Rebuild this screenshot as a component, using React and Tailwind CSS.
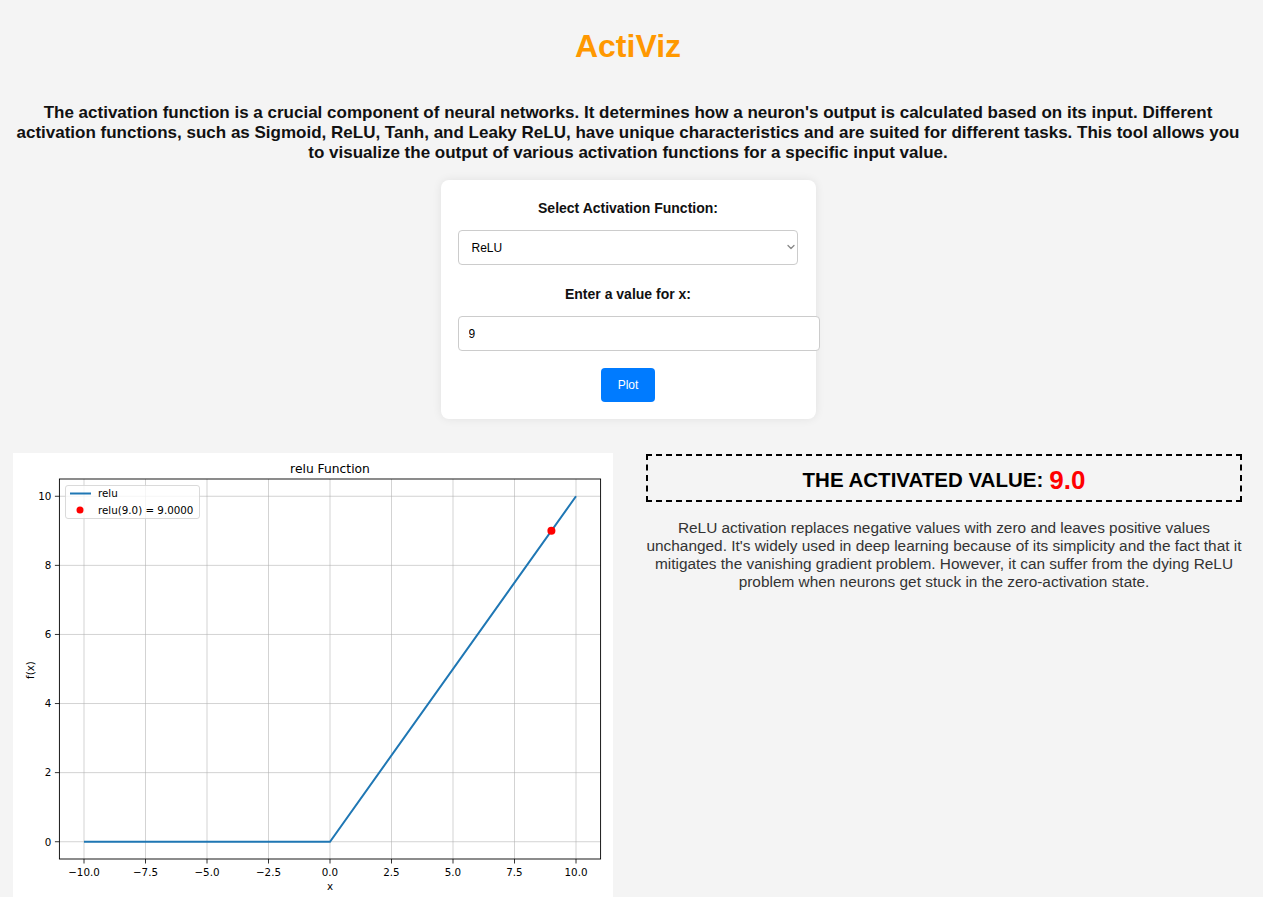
import { useState } from 'react'

const descriptions = {
  relu: "ReLU activation replaces negative values with zero and leaves positive values unchanged. It's widely used in deep learning because of its simplicity and the fact that it mitigates the vanishing gradient problem. However, it can suffer from the dying ReLU problem when neurons get stuck in the zero-activation state.",
}

// plot frame (image coords, 600 wide)
const AX = { left: 46.4, right: 587.6, top: 26, bottom: 406 }
const sx = (v) => AX.left + (v + 11) * ((AX.right - AX.left) / 22)
const sy = (v) => AX.bottom - (v + 0.5) * ((AX.bottom - AX.top) / 11)

const fmtTick = (v) => (v < 0 ? '\u2212' + Math.abs(v).toFixed(1) : v.toFixed(1))

function ReluChart({ x }) {
  const xTicks = [-10, -7.5, -5, -2.5, 0, 2.5, 5, 7.5, 10]
  const yTicks = [0, 2, 4, 6, 8, 10]
  const y = Math.max(0, x)
  return (
    <svg width="600" height="450" viewBox="0 0 600 450" className="block bg-white" style={{ fontFamily: '"DejaVu Sans", sans-serif' }}>
      {/* grid */}
      {xTicks.map((t) => (
        <line key={'gx' + t} x1={sx(t)} x2={sx(t)} y1={AX.top} y2={AX.bottom} stroke="#b0b0b0" strokeOpacity="0.7" strokeWidth="0.8" />
      ))}
      {yTicks.map((t) => (
        <line key={'gy' + t} x1={AX.left} x2={AX.right} y1={sy(t)} y2={sy(t)} stroke="#b0b0b0" strokeOpacity="0.7" strokeWidth="0.8" />
      ))}

      {/* relu line */}
      <polyline points={`${sx(-10)},${sy(0)} ${sx(0)},${sy(0)} ${sx(10)},${sy(10)}`} fill="none" stroke="#1f77b4" strokeWidth="2" />
      <circle cx={sx(x)} cy={sy(y)} r="4" fill="#ff0000" />

      {/* spines */}
      <rect x={AX.left} y={AX.top} width={AX.right - AX.left} height={AX.bottom - AX.top} fill="none" stroke="#000" strokeWidth="0.9" />

      {/* x ticks */}
      {xTicks.map((t) => (
        <g key={'tx' + t}>
          <line x1={sx(t)} x2={sx(t)} y1={AX.bottom} y2={AX.bottom + 4.5} stroke="#000" strokeWidth="0.8" />
          <text x={sx(t)} y={AX.bottom + 17} fontSize="10.3" textAnchor="middle" fill="#000">{fmtTick(t)}</text>
        </g>
      ))}
      {/* y ticks */}
      {yTicks.map((t) => (
        <g key={'ty' + t}>
          <line x1={AX.left - 4.5} x2={AX.left} y1={sy(t)} y2={sy(t)} stroke="#000" strokeWidth="0.8" />
          <text x={AX.left - 8} y={sy(t) + 3.8} fontSize="10.3" textAnchor="end" fill="#000">{t}</text>
        </g>
      ))}

      <text x={sx(0)} y="19.5" fontSize="12.3" textAnchor="middle" fill="#000">relu Function</text>
      <text x={sx(0)} y="437" fontSize="10.3" textAnchor="middle" fill="#000">x</text>
      <text x="0" y="0" fontSize="10.3" textAnchor="middle" fill="#000" transform="translate(21 217) rotate(-90)">f(x)</text>

      {/* legend */}
      <rect x="52.5" y="32.5" width="134" height="33" rx="2.5" fill="#fff" fillOpacity="0.8" stroke="#d0d0d0" strokeWidth="0.8" />
      <line x1="57" x2="78" y1="40.5" y2="40.5" stroke="#1f77b4" strokeWidth="2" />
      <text x="85" y="44" fontSize="10.3" fill="#000">relu</text>
      <circle cx="67" cy="57" r="3.5" fill="#ff0000" />
      <text x="85" y="61" fontSize="10.3" fill="#000">relu({x.toFixed(1)}) = {y.toFixed(4)}</text>
    </svg>
  )
}

export default function App() {
  const [fn, setFn] = useState('relu')
  const [value, setValue] = useState('9')
  const [plotted, setPlotted] = useState(9)

  return (
    <div className="min-h-screen bg-[#f4f4f4] pr-[7px] text-black" style={{ fontFamily: '"Liberation Sans", Arial, sans-serif' }}>
      <h1 className="pt-[28px] text-center text-[32px] leading-[37px] font-bold text-[#ff9800]">ActiViz</h1>

      <p className="mt-[38px] px-[10px] text-center text-[17px] leading-[20px] font-bold text-[#111]">
        The activation function is a crucial component of neural networks. It determines how a neuron's output is calculated based on its input. Different activation functions, such as Sigmoid, ReLU, Tanh, and Leaky ReLU, have unique characteristics and are suited for different tasks. This tool allows you to visualize the output of various activation functions for a specific input value.
      </p>

      {/* Controls card */}
      <div className="mx-auto mt-[17px] w-[375px] rounded-lg bg-white px-[17px] pt-[20px] pb-[17px] shadow-[0_0_10px_rgba(0,0,0,0.08)]">
        <label className="block text-center text-[14px] leading-[16px] font-bold text-[#111]">Select Activation Function:</label>
        <div className="relative mt-[14px] w-[340px]">
          <select
            value={fn}
            onChange={(e) => setFn(e.target.value)}
            className="h-[35px] w-full appearance-none rounded border border-[#ccc] bg-white px-[13px] text-[12px] text-black"
          >
            <option value="sigmoid">Sigmoid</option>
            <option value="relu">ReLU</option>
            <option value="tanh">Tanh</option>
            <option value="leaky_relu">Leaky ReLU</option>
          </select>
          <svg className="pointer-events-none absolute top-[14px] right-[3px]" width="8" height="6" viewBox="0 0 8 6" fill="none">
            <path d="M1 1.5l3 3 3-3" stroke="#888" strokeWidth="1.3" strokeLinecap="round" strokeLinejoin="round" />
          </svg>
        </div>
        <label className="mt-[21px] block text-center text-[14px] leading-[16px] font-bold text-[#111]">Enter a value for x:</label>
        <input
          value={value}
          onChange={(e) => setValue(e.target.value)}
          className="mt-[14px] block h-[35px] w-[362px] rounded border border-[#ccc] bg-white px-[10px] text-[12px] text-black"
        />
        <div className="mt-[17px] flex justify-center">
          <button
            onClick={() => setPlotted(parseFloat(value) || 0)}
            className="h-[34px] w-[54px] rounded bg-[#007bff] text-[12px] text-white"
          >
            Plot
          </button>
        </div>
      </div>

      {/* Results */}
      <div className="mt-[34px] flex items-start gap-[33px] pl-[13px]">
        <ReluChart x={plotted} />
        <div className="mt-px w-[596px]">
          <div className="flex h-[48px] items-center justify-center border-2 border-dashed border-black pt-[4px]">
            <span className="text-[20.5px] font-bold uppercase">The activated value: </span>
            <span className="ml-[6px] text-[26px] font-bold text-[#ff0000]">{Math.max(0, plotted).toFixed(1)}</span>
          </div>
          <p className="mt-[17px] text-center text-[15.4px] leading-[18px] text-[#333]">{descriptions[fn] || descriptions.relu}</p>
        </div>
      </div>
    </div>
  )
}
